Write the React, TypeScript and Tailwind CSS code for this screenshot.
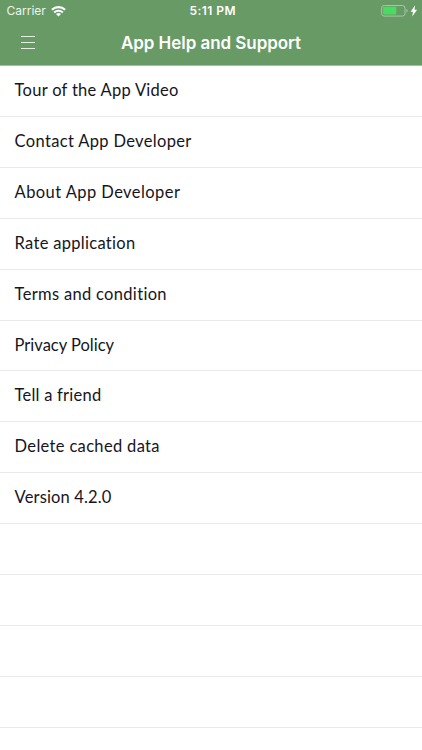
const items = [
    { label: "Tour of the App Video", style: "tracking-[0.28px]" },
    { label: "Contact App Developer", style: "tracking-[0.34px]" },
    { label: "About App Developer", style: "tracking-[0.43px]" },
    { label: "Rate application", style: "tracking-[0.3px]" },
    { label: "Terms and condition", style: "tracking-[0.32px]" },
    { label: "Privacy Policy", style: "tracking-[0px]" },
    { label: "Tell a friend", style: "tracking-[0.23px]" },
    { label: "Delete cached data", style: "tracking-[0.33px]" },
    { label: "Version 4.2.0", style: "tracking-[0.15px]" },
    { label: "", style: "" },
    { label: "", style: "" },
    { label: "", style: "" },
    { label: "", style: "" },
];

function WifiIcon() {
    return (
        <svg className="h-[11px] w-[15px]" viewBox="0 0 15 11" fill="none" stroke="white" strokeWidth="2.1">
            <path d="M.9 3.8C4.6 .2 10.4 .2 14.1 3.8" />
            <path d="M3.2 6.4C5.6 4.1 9.4 4.1 11.8 6.4" />
            <path d="M7.5 10.5L5 8C6.4 6.7 8.6 6.7 10 8Z" fill="white" stroke="none" />
        </svg>
    );
}

function BatteryIcon() {
    return (
        <svg className="h-3 w-[37px]" viewBox="0 0 37 12">
            <rect x=".6" y=".5" width="23.4" height="10.6" rx="2.6" fill="none" stroke="#a9c5a5" />
            <rect x="2.1" y="1.8" width="13.2" height="7.8" rx="1" fill="#4cd964" />
            <path d="M25.4 4.1C27.1 4.7 27.1 6.9 25.4 7.5Z" fill="#a9c5a5" />
            <path d="M34.1 .3L29.6 6.7H32L31.2 11.4L36.1 4.8H33.5Z" fill="white" />
        </svg>
    );
}

export default function App() {
    return (
        <div className="h-[750px] w-[422px] overflow-hidden bg-white font-['Lato',sans-serif]">
            <header className="h-[66px] border-b border-[#a5bea2] bg-[#689a66] font-['Inter',sans-serif] text-white">
                <div className="grid h-[22px] grid-cols-3 items-center pr-1 pl-[6.5px]">
                    <div className="flex items-center gap-[5px]">
                        <span className="text-[12px] text-[#eef4ed]">Carrier</span>
                        <WifiIcon />
                    </div>
                    <span className="pl-px text-center text-[12px] font-semibold tracking-[0.45px]">5:11 PM</span>
                    <div className="flex justify-end">
                        <BatteryIcon />
                    </div>
                </div>
                <div className="grid h-[43px] grid-cols-[60px_1fr_60px] items-center">
                    <button className="mb-[2px] ml-[21px] flex w-[14px] flex-col gap-[5px]" aria-label="Menu">
                        <span className="h-px w-full bg-[#e6efe5]" />
                        <span className="h-px w-full bg-[#e6efe5]" />
                        <span className="h-px w-full bg-[#e6efe5]" />
                    </button>
                    <h1 className="text-center text-[17px] font-semibold tracking-[-0.05px]">App Help and Support</h1>
                </div>
            </header>

            <ul>
                {items.map((item, index) => (
                    <li
                        key={index}
                        className="flex h-[50.92px] items-center border-b border-[#e9e9e9] pb-[1.2px] pl-[14.6px] text-[16.5px] text-[#15151d]"
                    >
                        <span className={item.style}>{item.label}</span>
                    </li>
                ))}
            </ul>
        </div>
    );
}
